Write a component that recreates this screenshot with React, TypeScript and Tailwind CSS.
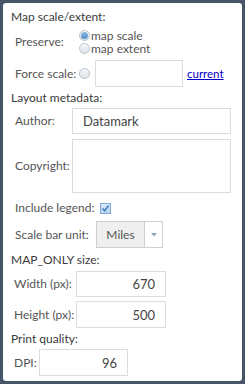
import React from 'react';

const font = { fontFamily: 'Lato, "Liberation Sans", sans-serif' };

function Radio({ checked }: { checked?: boolean }) {
  return (
    <span className="w-[11px] h-[11px] rounded-full border border-[#b9c3cc] bg-gradient-to-b from-[#f4f6f8] to-[#dde4ea] flex items-center justify-center shrink-0">
      {checked && <span className="w-[7px] h-[7px] rounded-full bg-gradient-to-b from-[#8fb8de] to-[#4f8fcb]" />}
    </span>
  );
}

function Heading({ children, mt }: { children: React.ReactNode; mt: string }) {
  return <div className={`h-[16px] flex items-center text-[12px] text-[#3a3a3a] ${mt}`}>{children}</div>;
}

export default function App() {
  return (
    <div className="w-[245px] h-[384px] bg-[#485569] p-[3px]" style={font}>
      <div className="h-full bg-white rounded-[3px] pt-[6px] pl-[8px] text-[12px] leading-[14px] text-[#555]">
        {/* Map scale / extent */}
        <Heading mt="mt-0">Map scale/extent:</Heading>

        <div className="flex items-center mt-[4px]">
          <div className="w-[64px] ml-[4px]">Preserve:</div>
          <div className="flex flex-col">
            <label className="h-[13px] leading-[13px] flex items-center gap-[1px]">
              <Radio checked />
              <span>map scale</span>
            </label>
            <label className="h-[13px] leading-[13px] flex items-center gap-[1px]">
              <Radio />
              <span>map extent</span>
            </label>
          </div>
        </div>

        <div className="flex items-center h-[27px] mt-[5px]">
          <div className="w-[64px] ml-[4px]">Force scale:</div>
          <Radio />
          <div className="ml-[5px] w-[88px] h-[27px] border border-[#dcdcdc] bg-white" />
          <a className="ml-[4px] text-[#0000cc] underline text-[11.5px]" href="#">current</a>
        </div>

        {/* Layout metadata */}
        <Heading mt="mt-[3px]">Layout metadata:</Heading>

        <div className="flex items-center h-[26px] mt-[2px]">
          <div className="w-[57px] ml-[4px]">Author:</div>
          <div className="w-[159px] h-[26px] border border-[#dcdcdc] flex items-center pl-[10px] text-[13px] text-[#444]">
            Datamark
          </div>
        </div>

        <div className="flex items-center h-[54px] mt-[5px]">
          <div className="w-[57px] ml-[4px]">Copyright:</div>
          <div className="w-[159px] h-[54px] border border-[#dcdcdc]" />
        </div>

        <div className="flex items-center h-[16px] mt-[7px]">
          <div className="ml-[4px]">Include legend:</div>
          <span className="ml-[6px] w-[11px] h-[11px] border border-[#7fa9d6] bg-gradient-to-b from-[#dbe9f7] to-[#b9d3ee] flex items-center justify-center">
            <svg width="9" height="9" viewBox="0 0 9 9">
              <path d="M1.5 4.5 L3.6 6.8 L7.6 1.6" fill="none" stroke="#3b7fc4" strokeWidth="1.6" />
            </svg>
          </span>
        </div>

        <div className="flex items-center h-[27px] mt-[5px]">
          <div className="w-[81px] ml-[4px]">Scale bar unit:</div>
          <div className="flex h-[27px] border border-[#cfcfcf]">
            <div className="w-[47px] bg-[#efefef] flex items-center justify-center text-[12px] text-[#555]">Miles</div>
            <div className="w-[18px] border-l border-[#cfcfcf] bg-white flex items-center justify-center">
              <svg width="6" height="4" viewBox="0 0 6 4">
                <path d="M0 0 H6 L3 3.5 Z" fill="#8ea6c0" />
              </svg>
            </div>
          </div>
        </div>

        {/* MAP_ONLY size */}
        <Heading mt="mt-[4px]">MAP_ONLY size:</Heading>

        <div className="flex items-center h-[26px] mt-[3px]">
          <div className="w-[62px] ml-[3px]">Width (px):</div>
          <div className="w-[90px] h-[26px] border border-[#dcdcdc] flex items-center justify-end pr-[10px] text-[13px] text-[#444]">670</div>
        </div>

        <div className="flex items-center h-[27px] mt-[4px]">
          <div className="w-[62px] ml-[3px]">Height (px):</div>
          <div className="w-[90px] h-[27px] border border-[#dcdcdc] flex items-center justify-end pr-[10px] text-[13px] text-[#444]">500</div>
        </div>

        {/* Print quality */}
        <Heading mt="mt-[3px]">Print quality:</Heading>

        <div className="flex items-center h-[27px] mt-[2px]">
          <div className="w-[25px] ml-[3px]">DPI:</div>
          <div className="w-[89px] h-[27px] border border-[#dcdcdc] flex items-center justify-end pr-[10px] text-[13px] text-[#444]">96</div>
        </div>
      </div>
    </div>
  );
}
